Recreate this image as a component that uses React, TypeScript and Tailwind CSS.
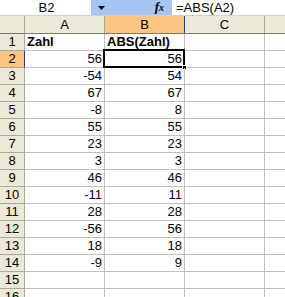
import React from "react";

const rows: [string, string][] = [
  ["56", "56"],
  ["-54", "54"],
  ["67", "67"],
  ["-8", "8"],
  ["55", "55"],
  ["23", "23"],
  ["3", "3"],
  ["46", "46"],
  ["-11", "11"],
  ["28", "28"],
  ["-56", "56"],
  ["18", "18"],
  ["-9", "9"],
];

export default function App() {
  const font = { fontFamily: '"Liberation Sans", Arial, sans-serif' };
  return (
    <div className="w-[285px] h-[297px] overflow-hidden bg-white text-black" style={font}>
      {/* formula bar */}
      <div className="flex h-[16px] border-b border-[#d4d0c8] text-[13px] leading-[16px]">
        <div className="w-[91px] text-center pl-[2px]">B2</div>
        <div className="w-[81px] bg-[#a6c4f4] flex items-center">
          <svg width="7" height="4" viewBox="0 0 7 4" className="ml-[7px]">
            <path d="M0 0H7L3.5 4Z" fill="#000" />
          </svg>
          <span
            className="ml-auto mr-[8px] italic font-bold text-[13px] leading-[16px]"
            style={{ fontFamily: '"Liberation Serif", serif' }}
          >
            f<span className="text-[10px]">x</span>
          </span>
        </div>
        <div className="pl-[4px]">=ABS(A2)</div>
      </div>
      {/* header row */}
      <div className="flex h-[18px] bg-[#ece9d8] border-b border-[#7a7963] text-[13px] leading-[17px]">
        <div className="w-[25px] shrink-0 border-r border-[#aca899]" />
        <div className="w-[80px] shrink-0 text-center border-r border-[#aca899]">A</div>
        <div className="w-[80px] shrink-0 text-center bg-[#fbc584] border-r border-[#1f3c8f]">B</div>
        <div className="w-[80px] shrink-0 text-center border-r border-[#aca899]">C</div>
        <div className="flex-1" />
      </div>
      {/* row 1 */}
      <Row n="1" a={<span className="font-bold pl-[2px]">Zahl</span>} b={<span className="font-bold pl-[2px]">ABS(Zahl)</span>} left />
      {rows.map((r, i) => (
        <Row key={i} n={String(i + 2)} a={<span className="pr-[2px]">{r[0]}</span>} b={<span className="pr-[2px]">{r[1]}</span>} sel={i === 0} />
      ))}
      <Row n="15" a={null} b={null} />
      <Row n="16" a={null} b={null} />
    </div>
  );
}

function Row({ n, a, b, sel, left }: { n: string; a: React.ReactNode; b: React.ReactNode; sel?: boolean; left?: boolean }) {
  const align = left ? "justify-start" : "justify-end";
  return (
    <div className="flex h-[17px] text-[13px] leading-[16px]">
      <div
        className={
          "w-[25px] shrink-0 text-center border-b border-r " +
          (sel ? "bg-[#fbc584] border-r-[#1f3c8f] border-b-[#aca899]" : "bg-[#ece9d8] border-[#aca899]")
        }
      >
        {n}
      </div>
      <div className={"w-[80px] shrink-0 flex border-b border-r border-[#c0c0c0] " + align}>{a}</div>
      <div className={"relative w-[80px] shrink-0 flex border-b border-r border-[#c0c0c0] " + align}>
        {b}
        {sel && (
          <>
            <div className="absolute left-[-2px] top-[-2px] right-[-1px] bottom-[-1px] border-[2px] border-black" />
            <div className="absolute right-[-3px] bottom-[-3px] w-[5px] h-[5px] bg-black border border-white" />
          </>
        )}
      </div>
      <div className="w-[80px] shrink-0 border-b border-r border-[#c0c0c0]" />
      <div className="flex-1 border-b border-[#c0c0c0]" />
    </div>
  );
}
